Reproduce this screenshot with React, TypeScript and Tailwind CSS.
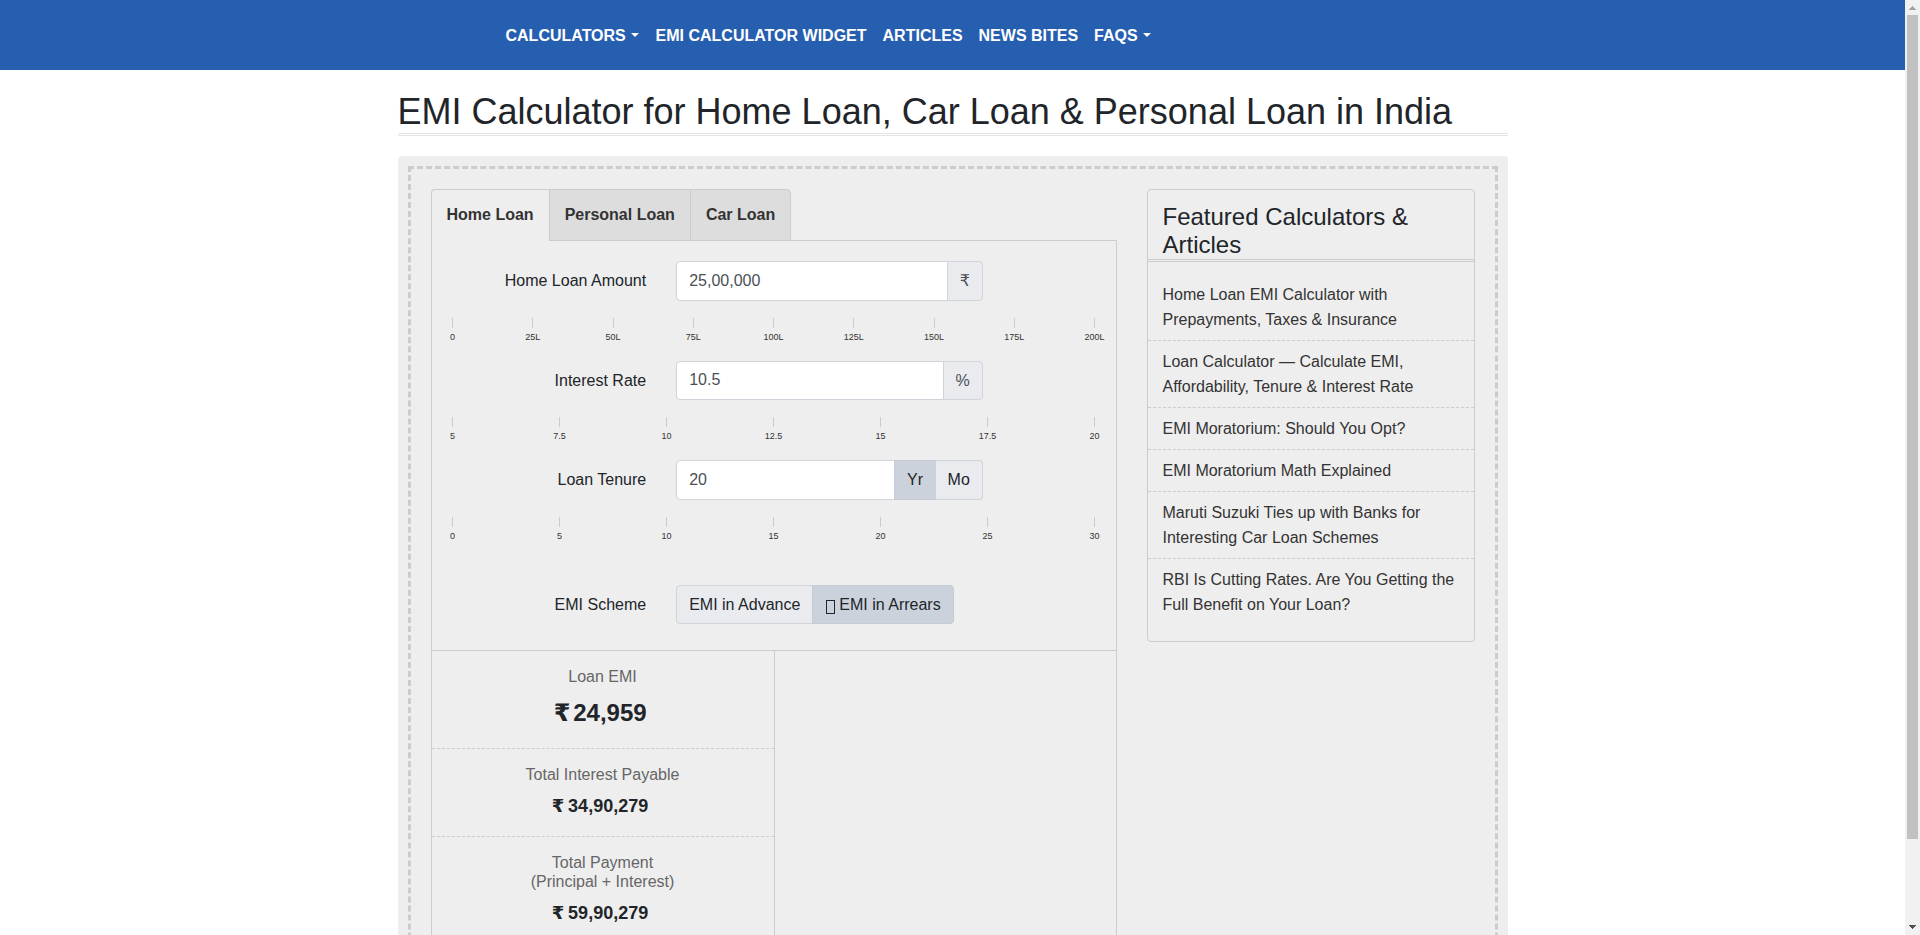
import type { ReactNode } from "react";

const articles = [
  ["Home Loan EMI Calculator with", "Prepayments, Taxes & Insurance"],
  ["Loan Calculator — Calculate EMI,", "Affordability, Tenure & Interest Rate"],
  ["EMI Moratorium: Should You Opt?"],
  ["EMI Moratorium Math Explained"],
  ["Maruti Suzuki Ties up with Banks for", "Interesting Car Loan Schemes"],
  ["RBI Is Cutting Rates. Are You Getting the", "Full Benefit on Your Loan?"],
];

function NavItem({ label, caret }: { label: string; caret?: boolean }) {
  return (
    <a href="#" className="px-2 whitespace-nowrap">
      {label}
      {caret && (
        <span className="mr-[0.8px] ml-[5px] inline-block border-x-[4px] border-t-[4px] border-x-transparent border-t-white align-[4px]" />
      )}
    </a>
  );
}

function Rupee() {
  return <span className="font-['DejaVu_Sans',sans-serif] leading-none">₹</span>;
}

function Scale({ marks }: { marks: string[] }) {
  return (
    <div className="ml-[21px] flex h-[27px] w-[642px] justify-between">
      {marks.map((m) => (
        <div key={m} className="flex w-0 flex-col items-center">
          <span className="h-[10px] w-px shrink-0 bg-[#ccc]" />
          <span className="mt-[3px] text-[9px] leading-[12px] whitespace-nowrap text-[#333]">{m}</span>
        </div>
      ))}
    </div>
  );
}

function Field({ label, children }: { label: string; children: ReactNode }) {
  return (
    <div className="flex items-stretch">
      <div className="mr-[30px] flex w-[214.67px] items-center justify-end pt-[1.2px] text-[#212529]">{label}</div>
      {children}
    </div>
  );
}

function ValueInput({ value }: { value: string }) {
  return (
    <input
      className="min-w-0 flex-1 rounded-l border border-[#ced4da] bg-white px-3 text-[#495057] outline-none"
      defaultValue={value}
    />
  );
}

function Addon({ children }: { children: ReactNode }) {
  return (
    <span className="-ml-px flex items-center rounded-r border border-[#ced4da] bg-[#e9ebef] px-3 pt-[1.2px] text-[#495057]">
      {children}
    </span>
  );
}

function Scrollbar() {
  return (
    <div className="flex w-[15px] shrink-0 flex-col items-center bg-[#f1f1f1]">
      <svg width="15" height="15" shapeRendering="crispEdges">
        <path d="M7 6h1v1h1v1h1v1h1v1H4V9h1V8h1V7h1z" fill="#a3a3a3" />
      </svg>
      <div className="h-[824px] w-[11px] bg-[#c1c1c1]" />
      <div className="flex-1" />
      <svg width="15" height="15" shapeRendering="crispEdges">
        <path d="M4 5h7v1h-1v1h-1v1h-1v1H7V8H6V7H5V6H4z" fill="#505050" />
      </svg>
    </div>
  );
}

export default function App() {
  return (
    <div className="flex h-[935px] w-[1920px] overflow-hidden bg-white font-['Liberation_Sans',Arial,sans-serif] text-base text-[#212529]">
      <div className="min-w-0 flex-1 overflow-hidden">
        <header className="flex h-[70px] items-center bg-[#275fb0] pt-[2px] pl-[497.5px] font-bold text-white">
          <NavItem label="CALCULATORS" caret />
          <NavItem label="EMI CALCULATOR WIDGET" />
          <NavItem label="ARTICLES" />
          <NavItem label="NEWS BITES" />
          <NavItem label="FAQS" caret />
        </header>

        <main className="mx-auto w-[1110px]">
          <h1 className="mt-5 h-[46px] border-b-[3px] border-double border-[#e5e5e5] text-[36px] leading-[43px]">
            EMI Calculator for Home Loan, Car Loan &amp; Personal Loan in India
          </h1>

          <div className="mt-5 h-[1000px] rounded bg-[#eee] p-[10px]">
            <div className="flex h-full items-start gap-[30px] border-[3px] border-dashed border-[#ccc] p-5">
              <section className="w-[686px]">
                <div className="flex h-[52px] font-bold text-[#333]">
                  <div className="flex items-center rounded-tl border-t border-l border-[#ccc] bg-[#eee] px-[15px] pb-px">
                    Home Loan
                  </div>
                  <div className="flex items-center border-y border-l border-[#ccc] bg-[#ddd] px-[15px]">
                    Personal Loan
                  </div>
                  <div className="flex items-center rounded-tr border border-[#ccc] bg-[#ddd] px-[15px]">Car Loan</div>
                  <div className="flex-1 border-b border-[#ccc]" />
                </div>

                <div className="h-[900px] border-r border-l border-[#ccc]">
                  <div className="h-[410px] border-b border-[#ccc] pt-5">
                    <Field label="Home Loan Amount">
                      <div className="flex h-[39.6px] w-[306.7px]">
                        <ValueInput value="25,00,000" />
                        <Addon>
                          <Rupee />
                        </Addon>
                      </div>
                    </Field>
                    <div className="h-[17.4px]" />
                    <Scale marks={["0", "25L", "50L", "75L", "100L", "125L", "150L", "175L", "200L"]} />
                    <div className="h-[15.6px]" />
                    <Field label="Interest Rate">
                      <div className="flex h-[39.6px] w-[306.7px]">
                        <ValueInput value="10.5" />
                        <Addon>%</Addon>
                      </div>
                    </Field>
                    <div className="h-[16.8px]" />
                    <Scale marks={["5", "7.5", "10", "12.5", "15", "17.5", "20"]} />
                    <div className="h-4" />
                    <Field label="Loan Tenure">
                      <div className="flex h-[39.6px] w-[306.7px]">
                        <ValueInput value="20" />
                        <button className="-ml-px border border-[#c4cbd3] bg-[#cbd2dc] px-[12.5px]">Yr</button>
                        <button className="-ml-px rounded-r border border-l-0 border-[#ced4da] bg-[#e9ebef] px-3">
                          Mo
                        </button>
                      </div>
                    </Field>
                    <div className="h-[17.4px]" />
                    <Scale marks={["0", "5", "10", "15", "20", "25", "30"]} />
                    <div className="h-[41px]" />
                    <Field label="EMI Scheme">
                      <div className="flex h-[39px]">
                        <button className="rounded-l border border-[#ced4da] bg-[#e9ebef] px-3 pt-[1.2px]">
                          EMI in Advance
                        </button>
                        <button className="-ml-px flex items-center rounded-r border border-[#c4cbd3] bg-[#cbd2dc] px-3 pt-[1.2px]">
                          <span className="mt-[4px] mr-[4.5px] ml-[0.5px] h-[14px] w-[9px] border border-[#212529]" />
                          EMI in Arrears
                        </button>
                      </div>
                    </Field>
                  </div>

                  <div className="h-[490px] w-[343px] border-r border-[#ccc] text-center">
                    <div className="h-[98px] border-b border-dashed border-[#ccc] pt-4">
                      <h4 className="leading-[19px] text-[#666]">Loan EMI</h4>
                      <p className="mt-3 pr-[4.5px] text-2xl leading-[29px] font-bold [word-spacing:-4px]">
                        <Rupee /> 24,959
                      </p>
                    </div>
                    <div className="h-[88px] border-b border-dashed border-[#ccc] pt-4">
                      <h4 className="leading-[19px] text-[#666]">Total Interest Payable</h4>
                      <p className="mt-[9px] pr-[5px] text-lg leading-[27px] font-bold [word-spacing:-1.2px]">
                        <Rupee /> 34,90,279
                      </p>
                    </div>
                    <div className="pt-4">
                      <h4 className="leading-[19px] text-[#666]">
                        Total Payment
                        <br />
                        (Principal + Interest)
                      </h4>
                      <p className="mt-[9px] pr-[5px] text-lg leading-[27px] font-bold [word-spacing:-1.2px]">
                        <Rupee /> 59,90,279
                      </p>
                    </div>
                  </div>
                </div>
              </section>

              <aside className="h-[453px] w-[328px] rounded border border-[#ccc]">
                <h2 className="h-[72px] border-b-[3px] border-double border-[#ccc] pt-[13px] pl-[15px] text-2xl leading-[28px]">
                  Featured Calculators &amp;
                  <br />
                  Articles
                </h2>
                <ul className="pt-3 leading-[25px] text-[#333]">
                  {articles.map((lines) => (
                    <li
                      key={lines[0]}
                      className="border-b border-dashed border-[#ccc] py-2 pl-[15px] whitespace-nowrap last:border-b-0"
                    >
                      {lines.map((l) => (
                        <span key={l} className="block">
                          {l}
                        </span>
                      ))}
                    </li>
                  ))}
                </ul>
              </aside>
            </div>
          </div>
        </main>
      </div>
      <Scrollbar />
    </div>
  );
}
